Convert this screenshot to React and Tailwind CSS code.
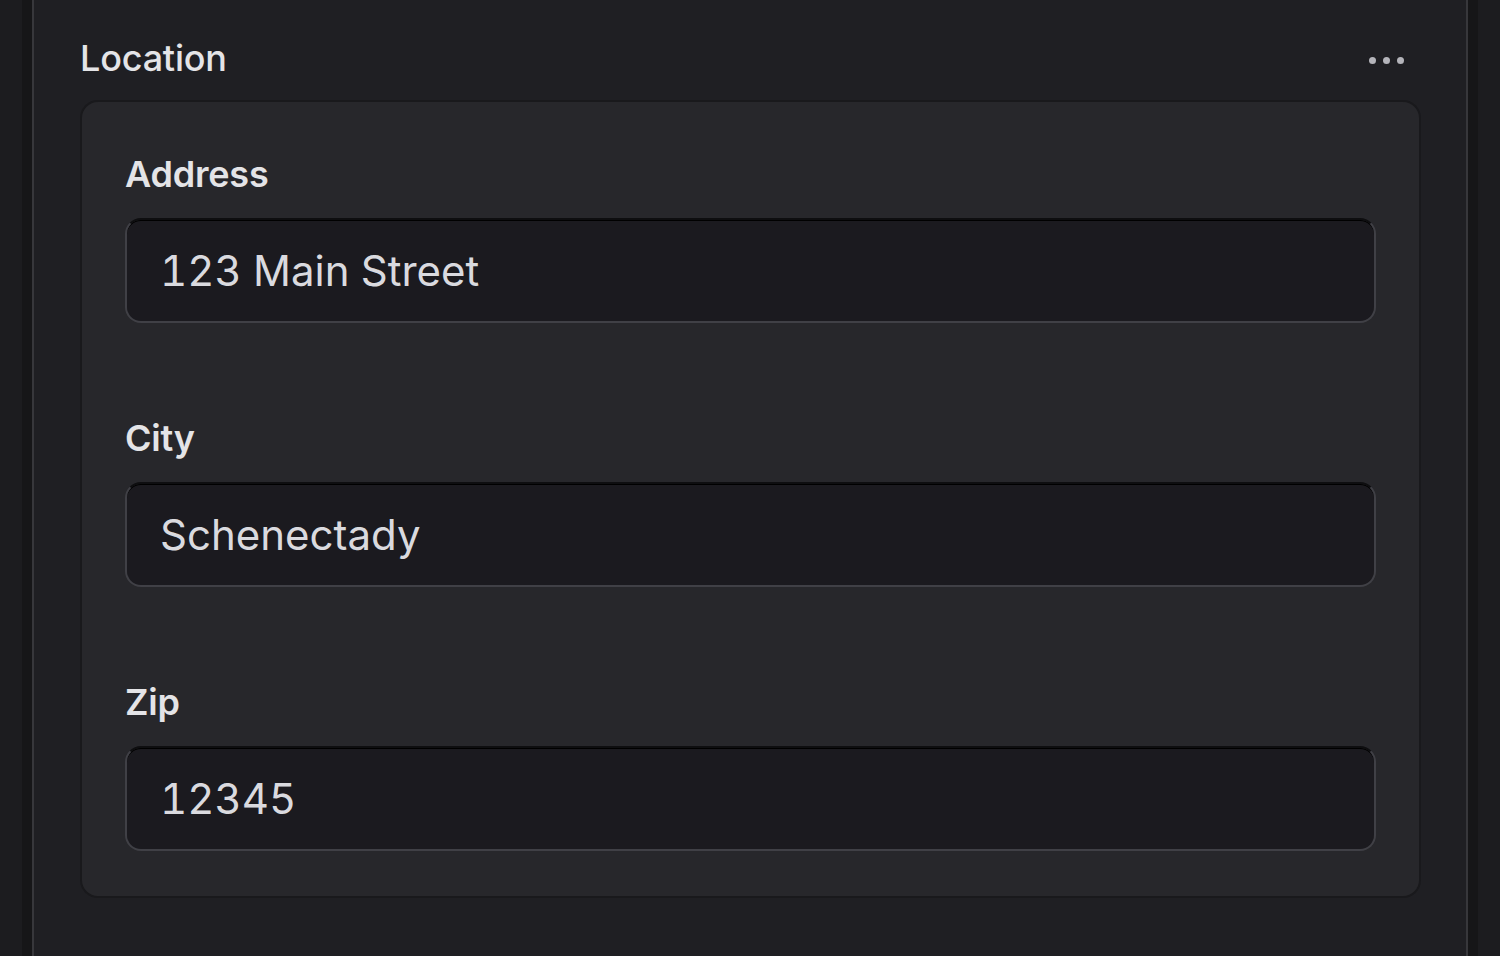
export default function App() {
  const fields = [
    { label: "Address", value: "123 Main Street" },
    { label: "City", value: "Schenectady" },
    { label: "Zip", value: "12345" },
  ];
  return (
    <div
      className="flex h-[956px] w-[1500px] overflow-hidden bg-[#1c1c1f]"
      style={{ fontFamily: "Inter, 'Noto Sans', sans-serif" }}
    >
      <div className="w-[22px] shrink-0" />
      <div className="w-[10px] shrink-0 bg-[#161618]" />
      <div className="flex-1 border-x-2 border-[#37373b] bg-[#1f1f23] pl-[46px] pr-[45px]">
        <div className="flex h-[100px] items-start justify-between pt-[36px]">
          <h2 className="text-[36px] font-medium leading-[44px] tracking-[-0.2px] text-[#e4e4e7]">
            Location
          </h2>
          <div className="mr-[17px] mt-[21px] flex gap-[7px]">
            <span className="h-[7px] w-[7px] rounded-full bg-[#b4b4ba]" />
            <span className="h-[7px] w-[7px] rounded-full bg-[#b4b4ba]" />
            <span className="h-[7px] w-[7px] rounded-full bg-[#b4b4ba]" />
          </div>
        </div>
        <div className="flex h-[798px] flex-col gap-[93px] rounded-[18px] border-2 border-[#19191c] bg-[#27272b] px-[43px] pt-[50px]">
          {fields.map((f) => (
            <div key={f.label} className="flex flex-col gap-[22px]">
              <label className="text-[36px] font-semibold leading-[44px] tracking-[-0.2px] text-[#e4e4e7]">
                {f.label}
              </label>
              <div className="flex h-[105px] items-center rounded-[16px] border-2 border-[#404046] border-t-[#0e0e10] bg-[#1b1a1f] pl-[33px] shadow-[inset_0_1px_0_#000]">
                <span className="text-[42px] leading-[50px] tabular-nums text-[#dadadf]">
                  {f.value}
                </span>
              </div>
            </div>
          ))}
        </div>
      </div>
      <div className="w-[10px] shrink-0 bg-[#161618]" />
      <div className="w-[22px] shrink-0" />
    </div>
  );
}
